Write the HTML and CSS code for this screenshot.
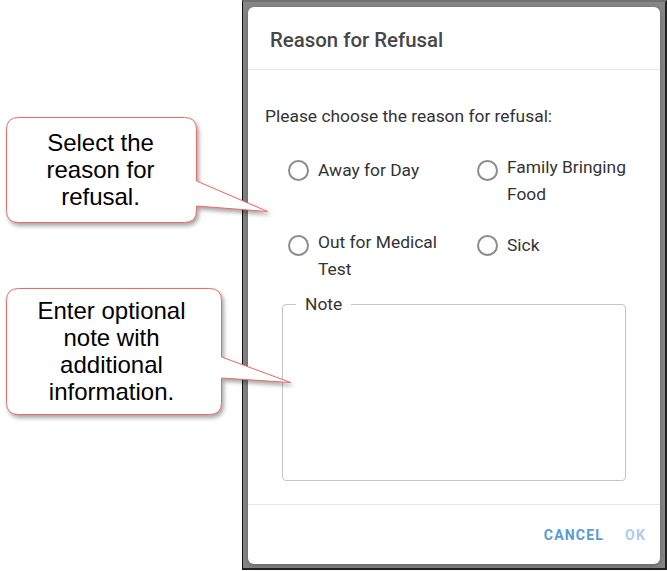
FILE: index.html
```html
<!DOCTYPE html>
<html lang="en">
<head>
<meta charset="utf-8">
<title>Reason for Refusal</title>
<link rel="stylesheet" href="styles.css">
</head>
<body>
<div class="page">
  <div class="gutter"></div>
  <div class="frame">
    <div class="dialog">
      <div class="dlg-header">
        <h2 class="dlg-title">Reason for Refusal</h2>
      </div>
      <div class="dlg-body">
        <p class="prompt">Please choose the reason for refusal:</p>
        <div class="radio-grid">
          <label class="radio"><span class="radio-icon"></span><span class="radio-label radio-label-single">Away for Day</span></label>
          <label class="radio"><span class="radio-icon"></span><span class="radio-label">Family Bringing Food</span></label>
          <label class="radio"><span class="radio-icon"></span><span class="radio-label">Out for Medical Test</span></label>
          <label class="radio"><span class="radio-icon"></span><span class="radio-label radio-label-single">Sick</span></label>
        </div>
        <fieldset class="note">
          <legend class="note-legend">Note</legend>
          <div class="note-area"></div>
        </fieldset>
      </div>
      <div class="dlg-footer">
        <button class="btn">Cancel</button>
        <button class="btn btn-disabled">OK</button>
      </div>
    </div>
  </div>

  <svg class="callouts" width="300" height="571" viewBox="0 0 300 571" xmlns="http://www.w3.org/2000/svg">
    <path class="bubble" d="M18.5 117.5 H184.5 Q196.5 117.5 196.5 129.5 V181 L267.5 211.5 L196.5 206 V210.5 Q196.5 222.5 184.5 222.5 H18.5 Q6.5 222.5 6.5 210.5 V129.5 Q6.5 117.5 18.5 117.5 Z"/>
    <path class="bubble" d="M18.5 288.5 H209.5 Q221.5 288.5 221.5 300.5 V357 L290.5 382.5 L221.5 378 V402.5 Q221.5 414.5 209.5 414.5 H18.5 Q6.5 414.5 6.5 402.5 V300.5 Q6.5 288.5 18.5 288.5 Z"/>
  </svg>
  <div class="callout-text callout-one">Select the<br>reason for<br>refusal.</div>
  <div class="callout-text callout-two">Enter optional<br>note with<br>additional<br>information.</div>
</div>
</body>
</html>
```

FILE: styles.css
```css
html, body {
  margin: 0;
  padding: 0;
  background: #ffffff;
}

.page {
  position: relative;
  width: 667px;
  height: 571px;
  overflow: hidden;
  display: flex;
  align-items: flex-start;
  font-family: Roboto, "Noto Sans", sans-serif;
}

.gutter {
  width: 242px;
  flex: 0 0 242px;
}

.frame {
  box-sizing: border-box;
  width: 425px;
  height: 570px;
  background: #878787;
  border-left: 1px solid #111111;
  border-right: 2px solid #222222;
  border-bottom: 2px solid #222222;
  border-top: 2px solid #727272;
  padding: 5px 5px 4px 5px;
}

.dialog {
  box-sizing: border-box;
  width: 412px;
  height: 557px;
  background: #ffffff;
  border-radius: 6px;
  display: flex;
  flex-direction: column;
  box-shadow: 0 2px 6px rgba(0, 0, 0, 0.25);
}

.dlg-header {
  padding: 21px 22px 17px;
  border-bottom: 1px solid #e6e6e6;
}

.dlg-title {
  margin: 0;
  font-size: 20.4px;
  line-height: 24px;
  font-weight: 500;
  color: #474747;
}

.dlg-body {
  padding: 34px 17px 0;
}

.prompt {
  margin: 0;
  font-size: 17.4px;
  line-height: 24px;
  color: #333333;
}

.radio-grid {
  margin-top: 26px;
  padding-left: 21px;
  display: grid;
  grid-template-columns: 189px 1fr;
  row-gap: 22px;
}

.radio {
  display: flex;
  align-items: flex-start;
}

.radio-icon {
  box-sizing: border-box;
  flex: 0 0 21px;
  width: 21px;
  height: 21px;
  margin: 6px 9.5px 0 1.5px;
  border: 2px solid #8c8c8c;
  border-radius: 50%;
}

.radio-label {
  width: 135px;
  font-size: 17.4px;
  line-height: 26.5px;
  color: #333333;
}

.radio-label-single {
  padding-top: 2.5px;
}

.note {
  margin: 12px 17px 0;
  padding: 0 0 0 13px;
  border: 1px solid #c4c4c4;
  border-radius: 4px;
}

.note-legend {
  padding: 0 9px;
  font-size: 17.4px;
  line-height: 20px;
  color: #333333;
}

.note-area {
  height: 166px;
}

.dlg-footer {
  margin-top: auto;
  box-sizing: border-box;
  height: 60px;
  border-top: 1px solid #e6e6e6;
  display: flex;
  justify-content: flex-end;
  align-items: center;
  gap: 21px;
  padding-right: 14px;
}

.btn {
  background: none;
  border: 0;
  padding: 0;
  margin: 0;
  font-family: Roboto, "Noto Sans", sans-serif;
  font-size: 14px;
  line-height: 20px;
  font-weight: 700;
  letter-spacing: 1.2px;
  text-transform: uppercase;
  color: #5a9bd6;
}

.btn-disabled {
  color: #a9cdee;
}

.callouts {
  position: absolute;
  left: 0;
  top: 0;
  pointer-events: none;
  filter: drop-shadow(2px 3px 2px rgba(0, 0, 0, 0.35));
}

.bubble {
  fill: #ffffff;
  stroke: #ea6a6a;
  stroke-width: 1;
}

.callout-text {
  position: absolute;
  left: 6px;
  display: flex;
  align-items: center;
  justify-content: center;
  text-align: center;
  font-family: "Liberation Sans", Arial, sans-serif;
  font-size: 24px;
  line-height: 27px;
  color: #000000;
}

.callout-one {
  top: 117px;
  width: 189px;
  height: 105px;
}

.callout-two {
  top: 288px;
  width: 211px;
  height: 126px;
}
```
